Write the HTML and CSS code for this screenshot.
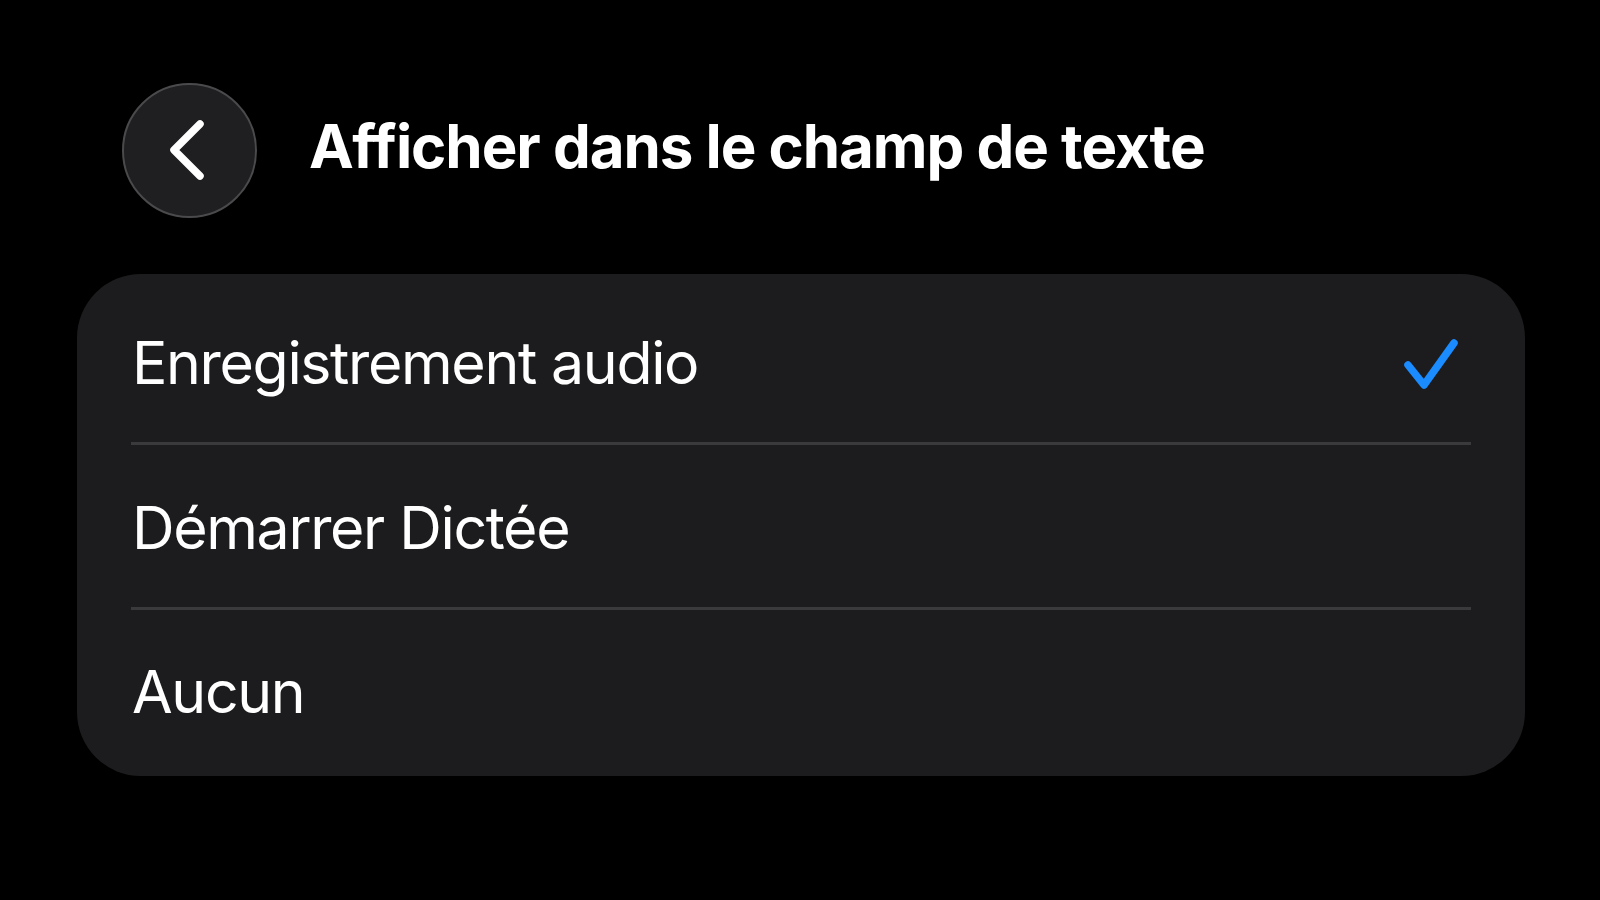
FILE: index.html
```html
<!DOCTYPE html>
<html lang="fr">
<head>
<meta charset="utf-8">
<title>Afficher dans le champ de texte</title>
<link rel="stylesheet" href="styles.css">
</head>
<body>
<div class="page">
  <header class="header">
    <button class="back" aria-label="Retour">
      <svg width="40" height="64" viewBox="0 0 40 64" aria-hidden="true">
        <path d="M33 5 L7 31 L33 57" fill="none" stroke="#ffffff" stroke-width="7.5" stroke-linecap="round" stroke-linejoin="round"/>
      </svg>
    </button>
    <h1 class="title">Afficher dans le champ de texte</h1>
  </header>
  <section class="card">
    <div class="row row-first">
      <span class="label">Enregistrement audio</span>
      <svg class="check" width="56" height="56" viewBox="0 0 56 56" aria-hidden="true">
        <path d="M5 28 L21 48 L51 6" fill="none" stroke="#1a8cff" stroke-width="7.5" stroke-linecap="round" stroke-linejoin="round"/>
      </svg>
    </div>
    <div class="sep"></div>
    <div class="row row-mid">
      <span class="label">Démarrer Dictée</span>
    </div>
    <div class="sep"></div>
    <div class="row row-last">
      <span class="label">Aucun</span>
    </div>
  </section>
</div>
</body>
</html>
```

FILE: styles.css
```css
html, body {
  margin: 0;
  padding: 0;
  background: #000000;
}
body {
  width: 1600px;
  height: 900px;
  overflow: hidden;
  font-family: Inter, "Noto Sans", "Liberation Sans", sans-serif;
  color: #ffffff;
}
.page {
  padding: 83px 0 0 77px;
}
.header {
  display: flex;
  align-items: center;
  padding-left: 45px;
  gap: 52px;
  height: 135px;
}
.back {
  width: 135px;
  height: 135px;
  border-radius: 50%;
  background: #1f1f21;
  border: 2px solid #4a4a4c;
  box-sizing: border-box;
  display: flex;
  align-items: center;
  justify-content: center;
  padding: 0 6px 0 0;
  margin: 0;
  flex: none;
}
.back svg {
  display: block;
}
.title {
  margin: 0;
  font-size: 60px;
  font-weight: 700;
  letter-spacing: -1.05px;
  line-height: 1;
  padding-bottom: 10px;
}
.card {
  margin-top: 56px;
  width: 1448px;
  background: #1c1c1e;
  border-radius: 64px;
  display: flex;
  flex-direction: column;
}
.row {
  display: flex;
  align-items: center;
  justify-content: space-between;
  padding: 0 66px 0 55px;
}
.row-first {
  height: 168px;
}
.row-mid {
  height: 162px;
}
.row-last {
  height: 166px;
}
.label {
  font-size: 59px;
  font-weight: 400;
  letter-spacing: -1.35px;
  line-height: 1;
  padding-top: 3px;
}
.row-first .label {
  padding-top: 9px;
}
.row-last .label {
  padding-top: 0;
  padding-bottom: 4px;
}
.check {
  display: block;
  margin-top: 14px;
}
.sep {
  height: 3px;
  margin: 0 54px;
  background: #3a3a3c;
}
```
